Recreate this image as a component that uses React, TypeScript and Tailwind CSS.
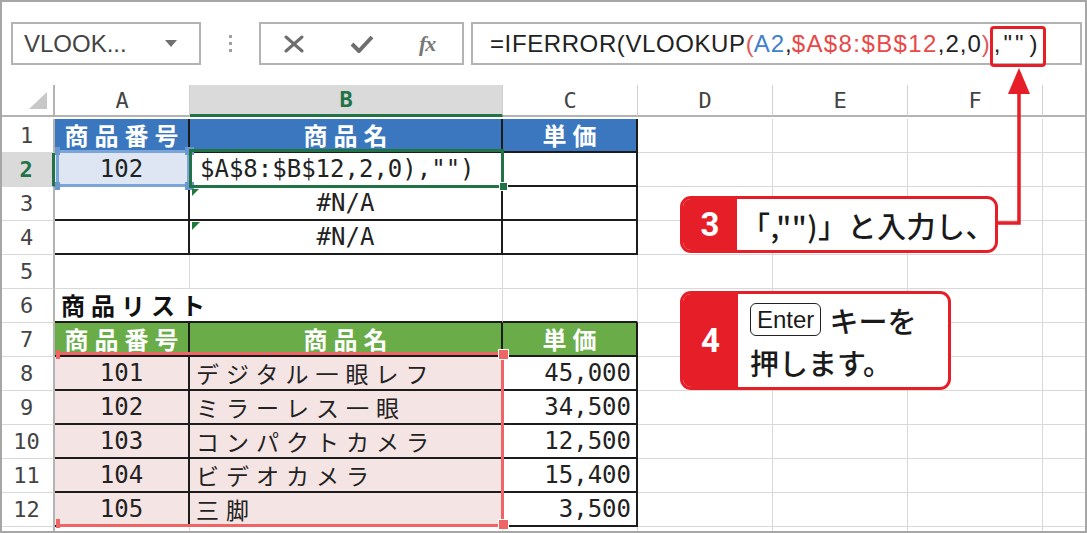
import React from "react";

const MONO = "font-['DejaVu_Sans_Mono','Noto_Sans_CJK_JP',monospace]";
const JP = "font-['Noto_Sans_CJK_JP',sans-serif]";
const SANS = "font-['Liberation_Sans','Noto_Sans_CJK_JP',sans-serif]";
const GRID = "border-r border-b border-[#d9d9d9]";
const TBL = "border-r-2 border-b-2 border-[#1c1c1c]";
const RED = "#e61e28";

type Cell = { c?: string; t?: React.ReactNode };

const head = (text: string, bg: string): Cell => ({
  c: `${TBL} ${bg} flex items-center justify-center pl-[6px] text-white font-bold text-[24px] tracking-[6px] ${JP}`,
  t: text,
});
const num = (text: string, bg = ""): Cell => ({
  c: `${TBL} ${bg} flex items-center justify-center text-[24px] text-[#222] ${MONO}`,
  t: text,
});
const name = (text: string, bg = ""): Cell => ({
  c: `${TBL} ${bg} flex items-center pl-[6px] text-[23px] tracking-[7px] text-[#222] whitespace-nowrap ${JP}`,
  t: text,
});
const price = (text: string): Cell => ({
  c: `${TBL} flex items-center justify-end pr-[5px] text-[24px] text-[#222] ${MONO}`,
  t: text,
});
const empty: Cell = { c: TBL };
const topLine: Cell = { c: "border-r border-r-[#d9d9d9] border-b-2 border-b-[#1c1c1c]" };

const PINK = "bg-[#f5e4e4]";
const products = [
  ["101", "デジタル一眼レフ", "45,000"],
  ["102", "ミラーレス一眼", "34,500"],
  ["103", "コンパクトカメラ", "12,500"],
  ["104", "ビデオカメラ", "15,400"],
  ["105", "三脚", "3,500"],
];

const rows: Cell[][] = [
  [head("商品番号", "bg-[#3a77bf]"), head("商品名", "bg-[#3a77bf]"), head("単価", "bg-[#3a77bf]")],
  [
    num("102", "bg-[#dde6f2]"),
    {
      c: `${TBL} flex items-center pl-[10px] text-[24px] text-[#222] whitespace-nowrap ${MONO}`,
      t: '$A$8:$B$12,2,0),"")',
    },
    empty,
  ],
  [empty, num("#N/A"), empty],
  [empty, num("#N/A"), empty],
  [],
  [
    {
      c: `border-b-2 border-b-[#1c1c1c] flex items-center pl-[6px] text-[24px] font-bold tracking-[6px] text-[#111] whitespace-nowrap ${JP}`,
      t: "商品リスト",
    },
    topLine,
    topLine,
  ],
  [head("商品番号", "bg-[#6aad48]"), head("商品名", "bg-[#6aad48]"), head("単価", "bg-[#6aad48]")],
  ...products.map(([n, p, v]) => [num(n, PINK), name(p, PINK), price(v)]),
];

function SheetRow({ n, cells }: { n?: number; cells: Cell[] }) {
  const active = n === 2;
  const full = [...cells];
  while (full.length < 7) full.push({});
  return (
    <>
      <div
        className={`flex items-center justify-center border-b border-b-[#d9d9d9] text-[22px] ${MONO} ${
          active
            ? "bg-[#dadada] border-r-[3px] border-r-[#217346] text-[#217346] font-bold"
            : "border-r-2 border-r-[#b3b3b3] text-[#444]"
        }`}
      >
        {n}
      </div>
      {full.map((cell, i) => (
        <div key={i} className={cell.c ?? GRID}>
          {cell.t}
        </div>
      ))}
    </>
  );
}

function FormulaBar() {
  return (
    <div className="h-[85px] flex items-start pt-[22px] pl-[11px] pr-[5px]">
      <div className="w-[190px] h-[43px] border-2 border-[#b3b3b3] flex items-center justify-between pl-[11px] pr-[22px]">
        <span className={`text-[24px] text-[#444] ${SANS}`}>VLOOK...</span>
        <svg width="12" height="7" viewBox="0 0 12 7">
          <polygon points="0,0 12,0 6,7" fill="#707070" />
        </svg>
      </div>
      <div className="w-[58px] h-[43px] flex flex-col items-center justify-center gap-[4px]">
        <span className="w-[3px] h-[3px] bg-[#a0a0a0]" />
        <span className="w-[3px] h-[3px] bg-[#a0a0a0]" />
        <span className="w-[3px] h-[3px] bg-[#a0a0a0]" />
      </div>
      <div className="w-[205px] h-[43px] border-2 border-[#b3b3b3] flex items-center pl-[22px] gap-[44px]">
        <svg width="22" height="18" viewBox="0 0 22 18">
          <path d="M3 2 L19 16 M19 2 L3 16" stroke="#6e6e6e" strokeWidth="3" strokeLinecap="round" />
        </svg>
        <svg width="26" height="20" viewBox="0 0 26 20">
          <path d="M3 10 L10 17 L23 3" stroke="#6e6e6e" strokeWidth="4" fill="none" strokeLinejoin="round" />
        </svg>
        <span className="text-[22px] italic font-bold text-[#777] font-['Liberation_Serif',serif] tracking-[-1px]">
          fx
        </span>
      </div>
      <div
        className={`ml-[7px] flex-1 h-[43px] border-2 border-[#b3b3b3] flex items-center pl-[17px] text-[24px] text-[#222] whitespace-nowrap ${SANS}`}
      >
        <span className="tracking-[0.6px]">=IFERROR(VLOOKUP</span>
        <span className="text-[#e05a5a]">(</span>
        <span className="text-[#3f7ed0] tracking-[1px]">A2</span>
        <span>,</span>
        <span className="text-[#e84848] tracking-[1.4px]">$A$8:$B$12</span>
        <span className="tracking-[1px]">,2,0</span>
        <span className="text-[#e05a5a]">)</span>
        <span className="tracking-[3px] pl-[4px]">,""</span>
        <span className="pl-[3px]">)</span>
      </div>
    </div>
  );
}

function Callout({ n, children, cls }: { n: string; children: React.ReactNode; cls: string }) {
  return (
    <div className={`absolute flex rounded-[11px] border-[3px] border-[#e61e28] bg-white overflow-hidden ${cls}`}>
      <div className="w-[55px] bg-[#e61e28] flex items-center justify-center text-white text-[33px] font-bold font-['Roboto',sans-serif]">
        {n}
      </div>
      <div className={`flex-1 flex flex-col justify-center pl-[12px] text-[29px] font-medium text-[#1a1a1a] leading-[42px] ${JP}`}>
        {children}
      </div>
    </div>
  );
}

const Square = ({ cls }: { cls: string }) => <div className={`absolute ${cls}`} />;

export default function App() {
  return (
    <div className="relative w-[1087px] h-[533px] overflow-hidden bg-white">
      <FormulaBar />
      <div className="grid grid-cols-[55px_135px_313px_135px_135px_135px_135px_44px] auto-rows-[34px]">
        <div className="h-[32px] border-r-2 border-b-2 border-[#b3b3b3] relative">
          <svg className="absolute right-[6px] bottom-[6px]" width="18" height="17" viewBox="0 0 18 17">
            <polygon points="18,0 18,17 0,17" fill="#c8c8c8" />
          </svg>
        </div>
        {["A", "B", "C", "D", "E", "F", ""].map((l) => (
          <div
            key={l}
            className={`h-[32px] flex items-center justify-center text-[22px] border-r border-r-[#d0d0d0] ${MONO} ${
              l === "B"
                ? "bg-[#dadada] text-[#217346] font-bold border-b-[3px] border-b-[#217346]"
                : "text-[#444] border-b-2 border-b-[#b3b3b3]"
            }`}
          >
            {l}
          </div>
        ))}
        {rows.map((cells, i) => (
          <SheetRow key={i} n={i + 1} cells={cells} />
        ))}
        <SheetRow cells={[]} />
      </div>

      {/* A2 reference selection */}
      <div className="absolute left-[56px] top-[150px] w-[134px] h-[37px] border-[3px] border-[#7ba4d8]" />
      <Square cls="left-[55px] top-[147px] w-[5px] h-[8px] bg-[#6b97d0]" />
      <Square cls="left-[185px] top-[147px] w-[9px] h-[8px] bg-[#6b97d0]" />
      <Square cls="left-[55px] top-[182px] w-[5px] h-[8px] bg-[#6b97d0]" />
      <Square cls="left-[185px] top-[182px] w-[9px] h-[8px] bg-[#6b97d0]" />

      {/* B2 active cell */}
      <div className="absolute left-[189px] top-[149px] w-[315px] h-[39px] border-[3px] border-[#217346]" />
      <Square cls="left-[499px] top-[182px] w-[9px] h-[9px] bg-[#217346] border border-white" />

      {/* error triangles */}
      <svg className="absolute left-[192px] top-[189px]" width="7" height="7" viewBox="0 0 7 7">
        <polygon points="0,0 7,0 0,7" fill="#1f7a3c" />
      </svg>
      <svg className="absolute left-[192px] top-[222px]" width="8" height="8" viewBox="0 0 8 8">
        <polygon points="0,0 8,0 0,8" fill="#1f7a3c" />
      </svg>

      {/* A8:B12 selection */}
      <div className="absolute left-[58px] top-[352px] w-[446px] h-[175px] border-t-[3px] border-r-[3px] border-b-[3px] border-[#ef6464]" />
      <Square cls="left-[56px] top-[350px] w-[4px] h-[9px] bg-[#ef6464]" />
      <Square cls="left-[56px] top-[519px] w-[4px] h-[9px] bg-[#ef6464]" />
      <Square cls="left-[498px] top-[349px] w-[11px] h-[11px] bg-[#ef6464] border border-white" />
      <Square cls="left-[498px] top-[519px] w-[11px] h-[11px] bg-[#ef6464] border border-white" />

      {/* annotation: red box + arrow */}
      <div className="absolute left-[990px] top-[26px] w-[56px] h-[41px] border-[3px] border-[#e61e28] rounded-[4px]" />
      <svg className="absolute left-0 top-0 pointer-events-none" width="1087" height="533">
        <polygon points="1008,94 1030,94 1019,68" fill={RED} />
        <path d="M1019 92 L1019 223 L996 223" stroke={RED} strokeWidth="3.5" fill="none" />
      </svg>

      <Callout n="3" cls="left-[680px] top-[196px] w-[318px] h-[57px]">
        <span className="whitespace-nowrap -ml-[8px] tracking-[0.5px]">「,"")」と入力し、</span>
      </Callout>
      <Callout n="4" cls="left-[680px] top-[291px] w-[271px] h-[99px]">
        <span className="flex items-center whitespace-nowrap">
          <span className={`inline-flex items-center h-[33px] px-[6px] mr-[8px] border-[1.5px] border-[#222] rounded-[6px] text-[24px] font-normal leading-none ${SANS}`}>
            Enter
          </span>
          キーを
        </span>
        <span className="whitespace-nowrap">押します。</span>
      </Callout>

      <div className="absolute inset-0 border-2 border-[#a6a6a6] pointer-events-none" />
    </div>
  );
}
